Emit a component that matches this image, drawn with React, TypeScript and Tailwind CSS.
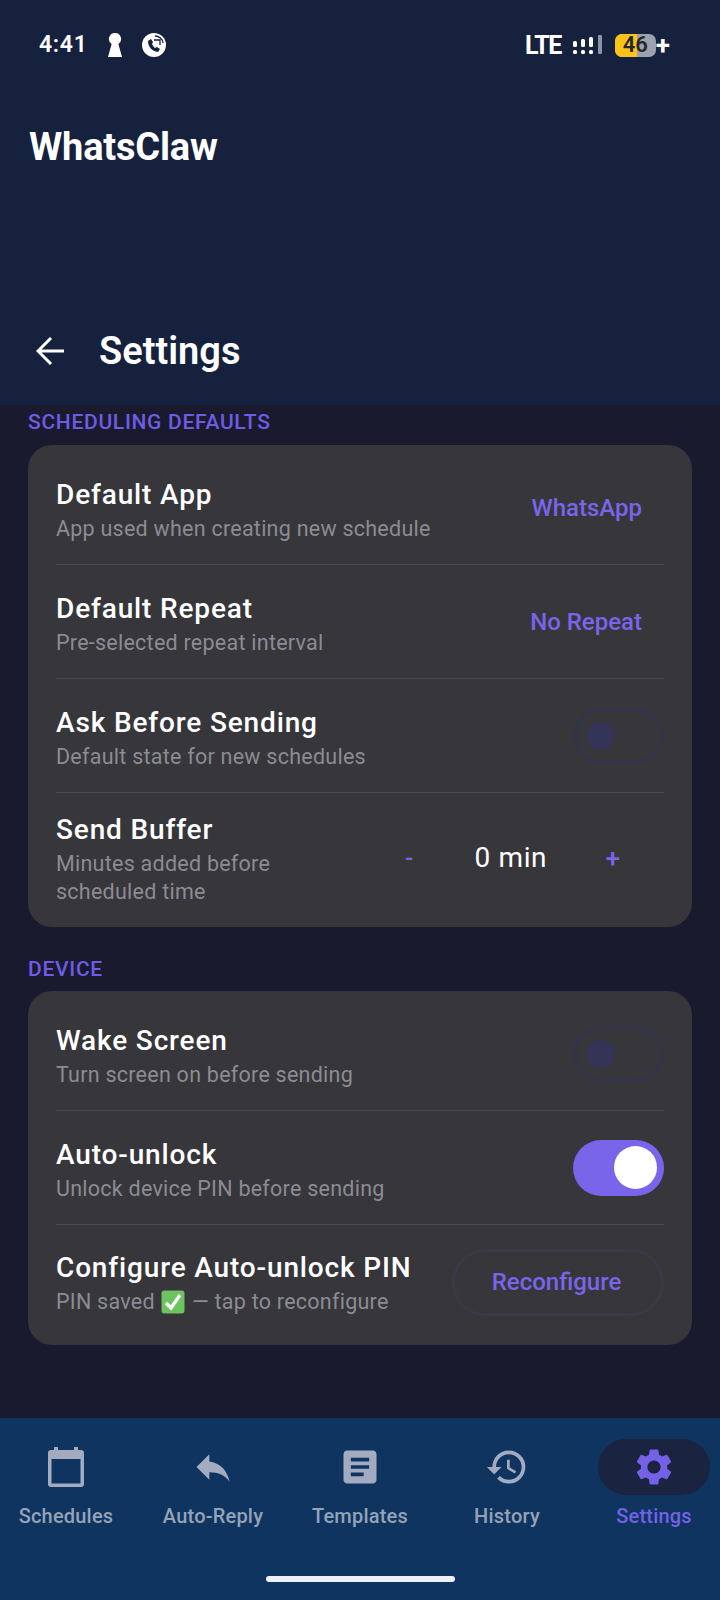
import { ReactNode } from "react"
import { MdArticle, MdHistory, MdReply, MdSettings } from "react-icons/md"

function Toggle({ on }: { on?: boolean }) {
  if (on) {
    return (
      <div className="flex h-[56px] w-[91px] shrink-0 items-center justify-end rounded-full bg-[#7965ea] pr-[7px]">
        <div className="h-[43px] w-[43px] rounded-full bg-white" />
      </div>
    )
  }
  return (
    <div className="flex h-[56px] w-[91px] shrink-0 items-center rounded-full border-[4px] border-[#343449] pl-[10px]">
      <div className="h-[28px] w-[28px] rounded-full bg-[#343456]" />
    </div>
  )
}

function CheckEmoji() {
  return (
    <svg viewBox="0 0 24 24" className="mx-[1px] inline-block h-[24px] w-[24px] align-[-5px]">
      <rect x="0.5" y="0.5" width="23" height="23" rx="3" fill="#6cc35f" />
      <path d="M5 13l5 5 9-13" fill="none" stroke="#fff" strokeWidth="3.4" />
    </svg>
  )
}

function Row({
  title,
  desc,
  right,
  last,
  descWidth,
  height = "min-h-[114px]",
  shift = "pt-[7px]",
}: {
  title: string
  desc: ReactNode
  right: ReactNode
  last?: boolean
  descWidth?: string
  height?: string
  shift?: string
}) {
  return (
    <div className={`flex items-center justify-between ${height} ${last ? "" : "border-b border-[#4a4a4f]"}`}>
      <div className={shift}>
        <div className="text-[28px] leading-[30px] font-medium tracking-[0.85px] whitespace-nowrap text-white">{title}</div>
        <div className={`mt-[5px] text-[21.5px] leading-[28px] tracking-[0.25px] text-[#8c8c92] ${descWidth ?? ""}`}>{desc}</div>
      </div>
      {right}
    </div>
  )
}

function Value({ children }: { children: string }) {
  return <div className="pr-[22px] text-[24px] font-medium text-[#7965ea]">{children}</div>
}

function CalendarIcon() {
  return (
    <svg viewBox="0 0 36 40" className="h-[40px] w-[36px]" fill="#a3abc0">
      <rect x="6" y="0" width="4" height="6" />
      <rect x="26" y="0" width="4" height="6" />
      <path d="M3 3h30a3 3 0 0 1 3 3v31a3 3 0 0 1-3 3H3a3 3 0 0 1-3-3V6a3 3 0 0 1 3-3zm.5 9v24.5h29V12z" fillRule="evenodd" />
    </svg>
  )
}

const tabs = [
  { label: "Schedules", icon: <CalendarIcon /> },
  { label: "Auto-Reply", icon: <MdReply className="h-[44px] w-[44px] text-[#a3abc0]" /> },
  { label: "Templates", icon: <MdArticle className="h-[44px] w-[44px] text-[#a3abc0]" /> },
  { label: "History", icon: <MdHistory className="h-[44px] w-[44px] text-[#a3abc0]" /> },
  { label: "Settings", icon: <MdSettings className="h-[44px] w-[44px] text-[#7461e6]" />, active: true },
]

export default function App() {
  return (
    <div className="flex h-[1600px] w-[720px] flex-col overflow-hidden bg-[#1a1a2e] font-['Roboto',sans-serif]">
      <header className="h-[405px] shrink-0 bg-[#16213e] px-[29px] pt-[30px]">
        <div className="flex h-[30px] items-center justify-between text-white">
          <div className="flex items-center pl-[10px]">
            <span className="text-[23px] font-semibold tracking-[0.7px]">4:41</span>
            <svg viewBox="0 0 14 24" className="ml-[20px] h-[24px] w-[14px]" fill="#fff">
              <path d="M7 0a6 6 0 0 1 3.4 11L14 24H0l3.6-13A6 6 0 0 1 7 0z" />
            </svg>
            <svg viewBox="0 0 24 24" className="ml-[20px] h-[24px] w-[24px]">
              <circle cx="12" cy="12" r="12" fill="#fff" />
              <path d="M6 8c0 6 4 10 10 11l2-3-3-2-2 1c-1-1-2-2-3-4l1-2-2-3z" fill="#16213e" />
              <path d="M13 3c4 0 8 3 8 7M12 7h6v5" fill="none" stroke="#16213e" strokeWidth="1.3" />
            </svg>
          </div>
          <div className="flex items-center pr-[21px]">
            <span className="text-[25px] leading-none font-bold tracking-[-1.5px]">LTE</span>
            <svg viewBox="0 0 30 20" className="mr-[1px] ml-[12px] h-[20px] w-[30px]" fill="#fff">
              <rect x="0" y="6" width="4" height="6" rx="1.5" />
              <rect x="0" y="15" width="4" height="4" rx="1.5" />
              <rect x="8" y="4" width="4" height="8" rx="1.5" />
              <rect x="8" y="15" width="4" height="4" rx="1.5" />
              <rect x="16" y="2" width="4" height="10" rx="1.5" />
              <rect x="16" y="15" width="4" height="4" rx="1.5" />
              <rect x="25" y="0" width="4" height="19" rx="1" fill="#8b93a8" />
            </svg>
            <div className="relative ml-[11px] flex h-[23px] w-[41px] items-center justify-center overflow-hidden rounded-[7px] bg-[#9ca3af]">
              <div className="absolute inset-y-0 left-0 w-[22px] bg-[#fcc419]" />
              <span className="relative text-[22px] leading-none font-semibold text-[#27272a]">46</span>
            </div>
            <span className="text-[26px] leading-none font-bold">+</span>
          </div>
        </div>
        <h1 className="mt-[65px] text-[38px] leading-[44px] font-bold tracking-[-0.2px] text-white">WhatsClaw</h1>
        <div className="mt-[157px] flex h-[50px] items-center">
          <svg viewBox="0 0 28 28" className="ml-[7px] h-[28px] w-[28px]" fill="none" stroke="#fff" strokeWidth="3">
            <path d="M28 14H2M15 1L2 14l13 13" />
          </svg>
          <h2 className="ml-[35px] text-[38px] leading-[44px] font-semibold text-white">Settings</h2>
        </div>
      </header>

      <main className="flex-1 px-[28px]">
        <div className="h-[40px] pt-[4px] text-[21px] leading-[26px] font-medium tracking-[0.7px] text-[#6f5ce6]">SCHEDULING DEFAULTS</div>
        <section className="rounded-[24px] bg-[#36363b] px-[28px] pt-[6px]">
          <Row title="Default App" desc="App used when creating new schedule" right={<Value>WhatsApp</Value>} />
          <Row title="Default Repeat" desc="Pre-selected repeat interval" right={<Value>No Repeat</Value>} />
          <Row title="Ask Before Sending" desc="Default state for new schedules" right={<Toggle />} />
          <Row
            last
            shift=""
            height="min-h-[134px]"
            title="Send Buffer"
            desc="Minutes added before scheduled time"
            descWidth="w-[250px]"
            right={
              <div className="mb-[4px] flex w-[290px] items-center pr-[44px] pl-[31px] text-[#7965ea]">
                <span className="text-[24px] font-medium">-</span>
                <span className="flex-1 pl-[3px] text-center text-[28px] tracking-[0.6px] text-white">0 min</span>
                <span className="text-[26px] font-medium">+</span>
              </div>
            }
          />
        </section>

        <div className="mt-[28px] h-[36px] text-[21px] leading-[28px] font-medium tracking-[0.7px] text-[#6f5ce6]">DEVICE</div>
        <section className="rounded-[24px] bg-[#36363b] px-[28px] pt-[6px] pb-[6px]">
          <Row title="Wake Screen" desc="Turn screen on before sending" right={<Toggle />} />
          <Row title="Auto-unlock" desc="Unlock device PIN before sending" right={<Toggle on />} />
          <Row
            last
            shift="pt-[4px]"
            title="Configure Auto-unlock PIN"
            desc={
              <>
                PIN saved <CheckEmoji /> — tap to reconfigure
              </>
            }
            right={
              <div className="flex h-[67px] w-[212px] shrink-0 items-center justify-center rounded-full border-[3px] border-[#3a3a46] pr-[3px] text-[24px] font-medium text-[#7965ea]">
                Reconfigure
              </div>
            }
          />
        </section>
      </main>

      <nav className="relative flex h-[182px] shrink-0 flex-col bg-[#0f3460] pt-[21px]">
        <div className="flex justify-center">
          {tabs.map((t) => (
            <div key={t.label} className="flex w-[147px] shrink-0 flex-col items-center">
              <div className={`flex h-[56px] w-[112px] items-center justify-center rounded-full ${t.active ? "bg-[#1a2340]" : ""}`}>
                {t.icon}
              </div>
              <span className={`mt-[8px] text-[20px] leading-[26px] font-medium tracking-[0.2px] ${t.active ? "text-[#7461e6]" : "text-[#94a3b8]"}`}>
                {t.label}
              </span>
            </div>
          ))}
        </div>
        <div className="mx-auto mt-[47px] h-[6px] w-[189px] rounded-full bg-[#eef1f7]" />
      </nav>
    </div>
  )
}
